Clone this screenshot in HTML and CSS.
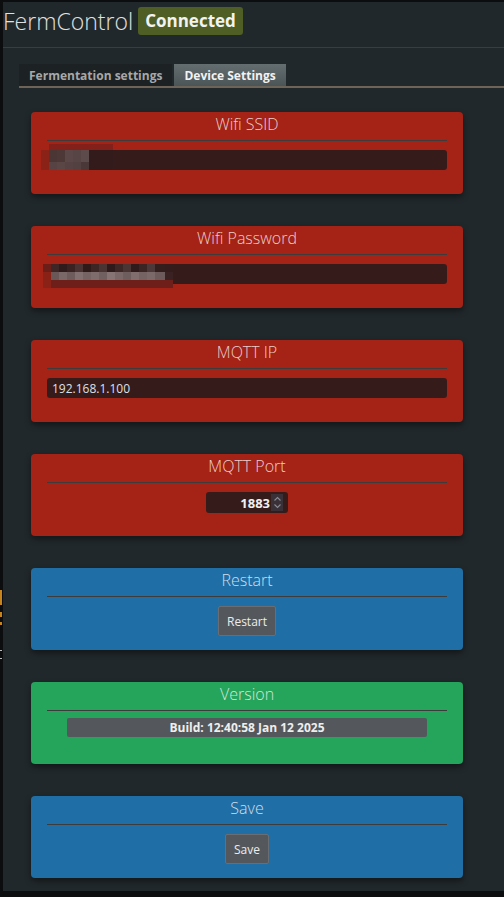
FILE: index.html
```html
<!DOCTYPE html>
<html lang="en">
<head>
<meta charset="utf-8">
<title>FermControl</title>
<link rel="stylesheet" href="styles.css">
</head>
<body>
<div class="app">
  <header class="topbar">
    <h1 class="brand">FermControl</h1>
    <span class="badge">Connected</span>
  </header>

  <nav class="tabs">
    <button class="tab">Fermentation settings</button>
    <button class="tab active">Device Settings</button>
  </nav>

  <main class="cards">
    <section class="card red">
      <h2 class="card-title">Wifi SSID</h2>
      <div class="rule"></div>
      <input class="text-input" type="text" value="">
      <div class="mosaic mosaic-ssid"></div>
    </section>

    <section class="card red">
      <h2 class="card-title">Wifi Password</h2>
      <div class="rule"></div>
      <input class="text-input" type="password" value="">
      <div class="mosaic mosaic-pass"></div>
    </section>

    <section class="card red">
      <h2 class="card-title">MQTT IP</h2>
      <div class="rule"></div>
      <input class="text-input" type="text" value="192.168.1.100">
    </section>

    <section class="card red">
      <h2 class="card-title">MQTT Port</h2>
      <div class="rule"></div>
      <div class="number-input">
        <input class="number-field" type="text" value="1883">
        <span class="spinner">
          <svg width="9" height="15" viewBox="0 0 9 15" fill="none" stroke="#8b8a92" stroke-width="1.1">
            <path d="M1.5 5.5 L4.5 2.5 L7.5 5.5"/>
            <path d="M1.5 9.5 L4.5 12.5 L7.5 9.5"/>
          </svg>
        </span>
      </div>
    </section>

    <section class="card blue">
      <h2 class="card-title">Restart</h2>
      <div class="rule"></div>
      <button class="btn">Restart</button>
    </section>

    <section class="card green">
      <h2 class="card-title">Version</h2>
      <div class="rule"></div>
      <div class="version">Build: 12:40:58 Jan 12 2025</div>
    </section>

    <section class="card blue">
      <h2 class="card-title">Save</h2>
      <div class="rule"></div>
      <button class="btn">Save</button>
    </section>
  </main>
</div>
</body>
</html>
```

FILE: styles.css
```css
html {
  height: 100%;
  background:
    linear-gradient(#c8841c, #c8841c) 0 590px / 2px 15px no-repeat,
    linear-gradient(#c8841c, #c8841c) 0 612px / 2px 5px no-repeat,
    linear-gradient(#c8841c, #c8841c) 0 622px / 2px 3px no-repeat,
    linear-gradient(#bbbbbb, #bbbbbb) 0 650px / 2px 1px no-repeat,
    linear-gradient(#bbbbbb, #bbbbbb) 0 658px / 2px 1px no-repeat,
    #0c0d0f;
}

body {
  margin: 2px 0 0 3px;
  height: 889px;
  overflow: hidden;
  background: #21282b;
  font-family: "Open Sans", "DejaVu Sans", sans-serif;
}

.app {
  display: flex;
  flex-direction: column;
}

.topbar {
  display: flex;
  align-items: center;
  height: 46px;
  box-sizing: border-box;
  padding-bottom: 12px;
  padding-top: 5px;
  border-bottom: 1px solid #363e41;
}

.brand {
  margin: 0;
  font-weight: 300;
  font-size: 23px;
  line-height: 28px;
  color: #e0e0e0;
}

.badge {
  margin-left: 5px;
  height: 28px;
  line-height: 28px;
  padding: 0 7px;
  border-radius: 3px;
  background: #4e5e24;
  color: #f2f2f2;
  font-weight: 700;
  font-size: 17px;
}

.tabs {
  display: flex;
  gap: 2px;
  margin: 16px 0 0 16px;
  border-bottom: 2px solid #6d6457;
}

.tab {
  height: 22px;
  padding: 0 10px;
  border: 0;
  border-radius: 0;
  background: #1c2224;
  color: #a8a8a8;
  font-family: "Open Sans", "DejaVu Sans", sans-serif;
  font-weight: 700;
  font-size: 12px;
}

.tab.active {
  background: linear-gradient(#646d70, #4b5457);
  color: #f2f2f2;
}

.cards {
  display: flex;
  flex-direction: column;
  gap: 32px;
  padding: 24px 41px 0 28px;
}

.card {
  position: relative;
  display: flex;
  flex-direction: column;
  align-items: center;
  min-height: 82px;
  box-sizing: border-box;
  padding: 0 16px 14px;
  border-radius: 4px;
  box-shadow: 0 3px 6px rgba(0, 0, 0, 0.45);
}

.card.red { background: #a52216; }
.card.blue { background: #1f6fa6; }
.card.green { background: #25a45c; }

.card-title {
  margin: 0;
  font-weight: 300;
  font-size: 16px;
  line-height: 24px;
  color: rgba(255, 255, 255, 0.78);
}

.rule {
  align-self: stretch;
  height: 1px;
  margin-top: 4px;
  margin-bottom: 9px;
  background: #3d3b3b;
}

.text-input {
  align-self: stretch;
  height: 20px;
  box-sizing: border-box;
  padding: 0 5px;
  border: 0;
  border-radius: 3px;
  outline: none;
  background: #351c1b;
  color: #dde0ea;
  font-family: "Open Sans", "DejaVu Sans", sans-serif;
  font-size: 12px;
}

.number-input {
  display: flex;
  align-items: center;
  width: 82px;
  height: 21px;
  box-sizing: border-box;
  padding: 0 5px 0 0;
  border-radius: 3px;
  background: #351c1b;
}

.number-field {
  width: 64px;
  min-width: 0;
  padding: 0 1px 0 0;
  border: 0;
  outline: none;
  background: transparent;
  text-align: right;
  color: #f0f0f4;
  font-family: "Open Sans", "DejaVu Sans", sans-serif;
  font-weight: 700;
  font-size: 13px;
}

.spinner {
  display: flex;
  align-items: center;
  justify-content: center;
  width: 12px;
  height: 17px;
  background: #3a3037;
}

.btn {
  height: 30px;
  padding: 0 8px;
  border: 1px solid #6a6e72;
  border-radius: 2px;
  background: #54585c;
  color: #ececec;
  font-family: "Open Sans", "DejaVu Sans", sans-serif;
  font-size: 12px;
}

.version {
  width: 360px;
  height: 19px;
  margin-top: -2px;
  line-height: 19px;
  border-radius: 2px;
  background: #54585c;
  color: #eeeeee;
  text-align: center;
  font-weight: 700;
  font-size: 12px;
}

/* pixelated redaction overlays */
.mosaic {
  position: absolute;
}

.mosaic-ssid {
  left: 10px;
  top: 32px;
  width: 72px;
  height: 26px;
  background:
    linear-gradient(to right, transparent 0 8px, #83201a 8px 72px) 0 0 / 72px 6px no-repeat,
    linear-gradient(to right, #8b2218 0 8px, #4b3535 8px 16px, #4e3737 16px 24px, #5b4747 24px 32px, #574444 32px 40px, #5d4a4a 40px 48px, #331b1b 48px 72px) 0 6px / 72px 12px no-repeat,
    linear-gradient(to right, #8b2218 0 8px, #574343 8px 16px, #5b4646 16px 24px, #564242 24px 32px, #534040 32px 40px, #4a3737 40px 48px, #331b1b 48px 72px) 0 18px / 72px 8px no-repeat;
}

.mosaic-pass {
  left: 12px;
  top: 38px;
  width: 130px;
  height: 24px;
  background:
    linear-gradient(to right, #6b1e18 0 8px, #3e2626 8px 16px, #2f1b1b 16px 24px, #3a2222 24px 32px, #4a3232 32px 40px, #2f1a1a 40px 48px, #3c2525 48px 56px, #4a3333 56px 64px, #2e1a1a 64px 72px, #3d2626 72px 80px, #4b3434 80px 88px, #2f1b1b 88px 96px, #3a2424 96px 104px, #4c3838 104px 112px, #341d1d 112px 122px, #341c1c 122px 130px) 0 0 / 130px 8px no-repeat,
    linear-gradient(to right, #8a2117 0 8px, #6a5858 8px 16px, #7a6868 16px 24px, #6e5c5c 24px 32px, #826f6f 32px 40px, #766464 40px 48px, #7e6b6b 48px 56px, #716060 56px 64px, #867373 64px 72px, #7a6868 72px 80px, #6f5e5e 80px 88px, #806d6d 88px 96px, #756363 96px 104px, #7b6969 104px 112px, #6d5b5b 112px 122px, #3b2222 122px 130px) 0 8px / 130px 8px no-repeat,
    linear-gradient(to right, #8b2218 0 8px, #6e1f19 8px 130px) 0 16px / 130px 8px no-repeat;
}
```
